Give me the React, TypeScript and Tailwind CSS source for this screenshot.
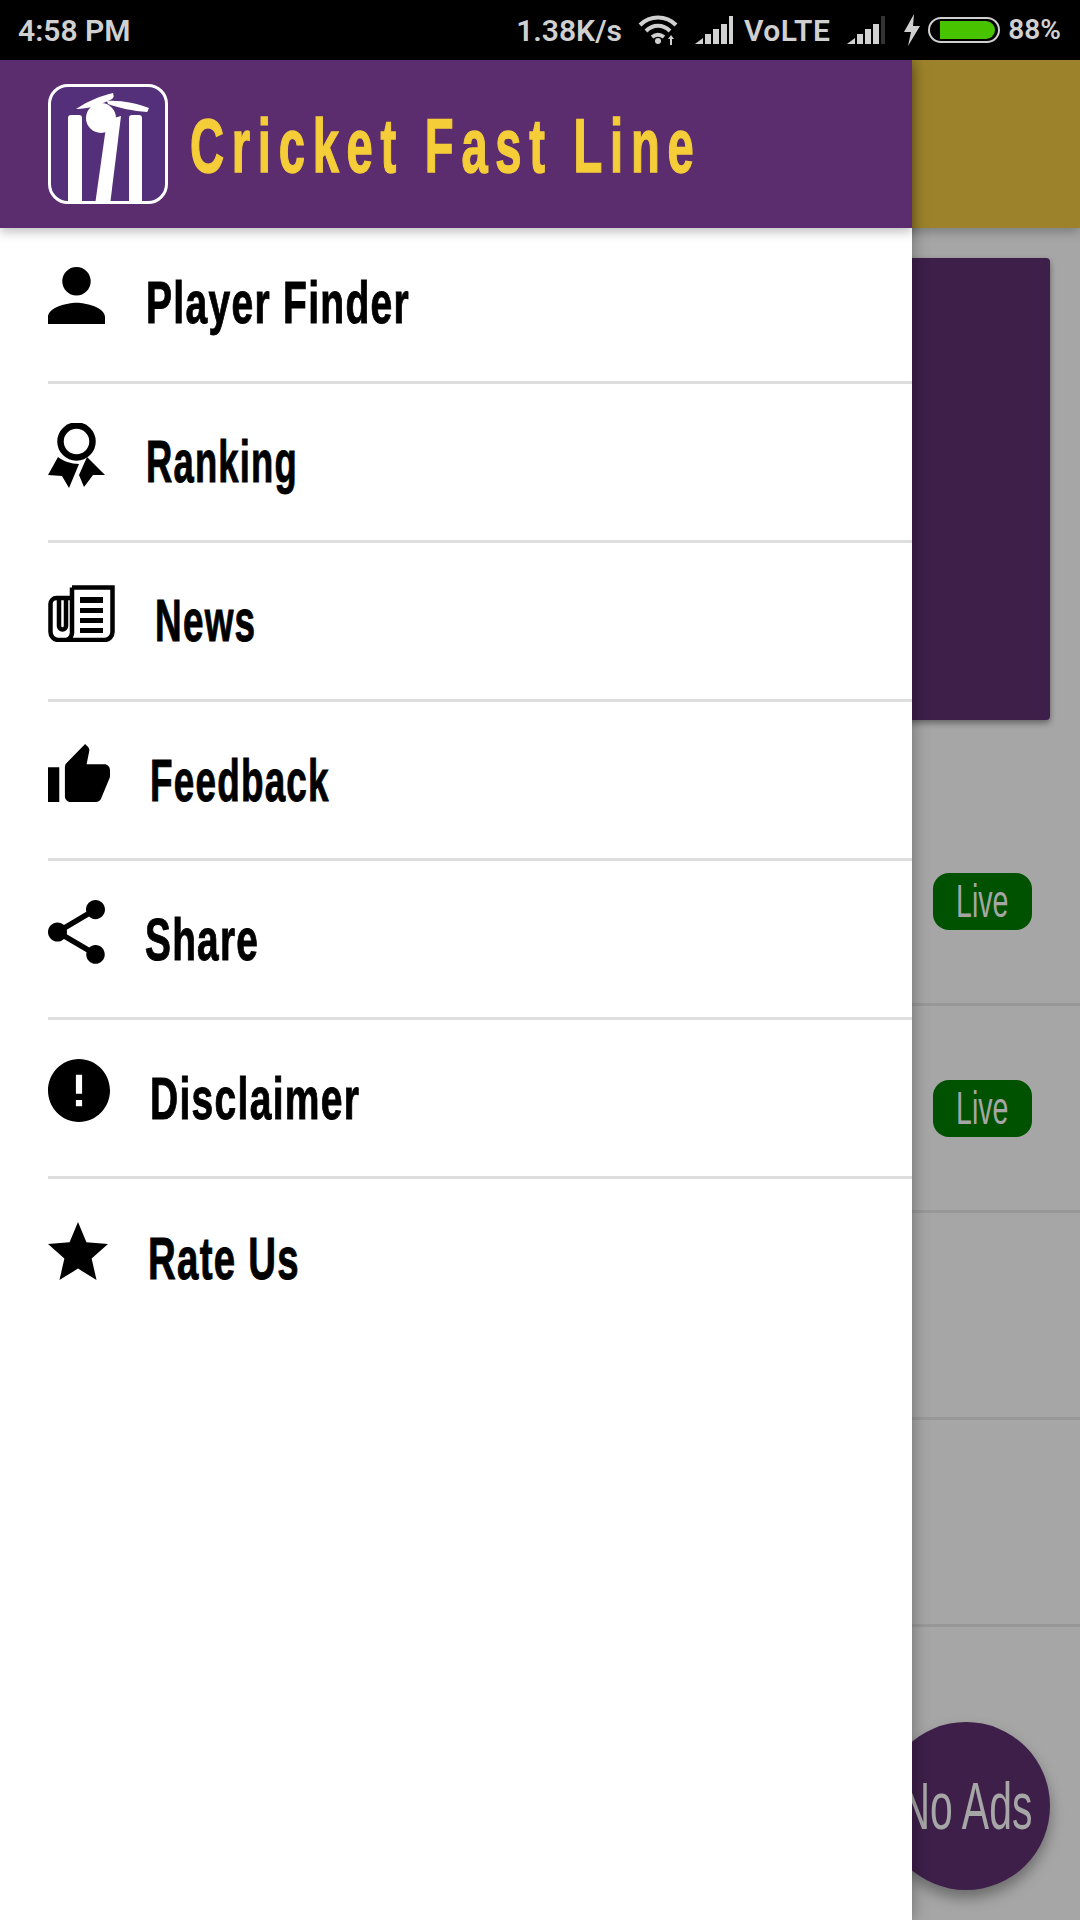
import type { ReactNode } from 'react'

const narrow = 'font-["Liberation_Sans_Narrow","Liberation_Sans",sans-serif]'

function PersonIcon() {
  return (
    <svg viewBox="4 4 16 16" className="h-[57px] w-[57px]" preserveAspectRatio="none">
      <path d="M12 12c2.21 0 4-1.79 4-4s-1.79-4-4-4-4 1.79-4 4 1.79 4 4 4zm0 2c-2.67 0-8 1.34-8 4v2h16v-2c0-2.66-5.33-4-8-4z" />
    </svg>
  )
}

function RibbonIcon() {
  return (
    <svg viewBox="0 0 57 65" className="h-[65px] w-[57px]">
      <circle cx="28.5" cy="18.5" r="16" fill="none" stroke="#000" strokeWidth="6.5" />
      <path d="M0 52 10 34c5 4 13 7 21 7L21 65l-7-12z" />
      <path d="M39 34 57 52H45l-9 12-5-12z" />
    </svg>
  )
}

function NewsIcon() {
  return (
    <svg viewBox="0 0 67 57" className="h-[57px] w-[67px]" fill="none" stroke="#000" strokeWidth="4.5">
      <path d="M24 2.5H64.500V47a8 8 0 0 1-8 8H10a8 8 0 0 1-7.500-8V19a6 6 0 0 1 6-6H24" />
      <path d="M24 2.500V46a9 9 0 0 1-5 9" />
      <path d="M11 13V41a3.500 3.500 0 0 0 7 0V13" />
      <path d="M32 12h23v6H32zM32 23h23v5H32zM32 33h23v5H32zM32 43h23v5H32z" fill="#000" stroke="none" />
    </svg>
  )
}

function ThumbIcon() {
  return (
    <svg viewBox="1 1 22 20" className="h-[58px] w-[62px]" preserveAspectRatio="none">
      <path d="M1 21h4V9H1v12zm22-11c0-1.1-.9-2-2-2h-6.31l.95-4.57.03-.32c0-.41-.17-.79-.44-1.06L14.17 1 7.59 7.59C7.22 7.95 7 8.45 7 9v10c0 1.1.9 2 2 2h9c.83 0 1.54-.5 1.84-1.22l3.02-7.05c.09-.23.14-.47.14-.73v-2z" />
    </svg>
  )
}

function ShareIcon() {
  return (
    <svg viewBox="3 2 18 20" className="h-[64px] w-[57px]" preserveAspectRatio="none">
      <path d="M18 16.08c-.76 0-1.44.3-1.96.77L8.91 12.7c.05-.23.09-.46.09-.7s-.04-.47-.09-.7l7.05-4.11c.54.5 1.25.81 2.04.81 1.66 0 3-1.34 3-3s-1.34-3-3-3-3 1.34-3 3c0 .24.04.47.09.7L8.04 9.81C7.5 9.31 6.79 9 6 9c-1.66 0-3 1.34-3 3s1.34 3 3 3c.79 0 1.5-.31 2.04-.81l7.12 4.16c-.05.21-.08.43-.08.65 0 1.61 1.31 2.92 2.92 2.92s2.92-1.31 2.92-2.92-1.31-2.92-2.92-2.92z" />
    </svg>
  )
}

function AlertIcon() {
  return (
    <svg viewBox="2 2 20 20" className="h-[63px] w-[62px]" preserveAspectRatio="none">
      <path d="M12 2C6.48 2 2 6.48 2 12s4.48 10 10 10 10-4.48 10-10S17.52 2 12 2zm1 15h-2v-2h2v2zm0-4h-2V7h2v6z" />
    </svg>
  )
}

function StarIcon() {
  return (
    <svg viewBox="2 2 20 19" className="h-[58px] w-[60px]" preserveAspectRatio="none">
      <path d="M12 17.27L18.18 21l-1.64-7.03L22 9.24l-7.19-.61L12 2 9.19 8.63 2 9.24l5.46 4.73L5.82 21z" />
    </svg>
  )
}

function Logo() {
  return (
    <div className="h-[120px] w-[120px] shrink-0 overflow-hidden rounded-[20px] border-[3px] border-white bg-[#55307a]">
      <svg viewBox="3 3 114 114" className="h-full w-full">
        <rect x="20" y="31" width="14" height="90" rx="3" fill="#fff" />
        <rect x="81" y="31" width="13" height="90" rx="3" fill="#fff" />
        <path d="M59 36 73 32 62 121H47z" fill="#fff" />
        <circle cx="53" cy="34" r="15" fill="#fff" />
        <path d="M28 25C40 17 52 12 65 9 66 12 66 13 64 15 52 21 40 25 28 25Z" fill="#fff" />
        <path d="M59 17C72 16 88 19 101 24 100 26 100 27 99 28 85 27 71 24 60 20Z" fill="#fff" />
      </svg>
    </div>
  )
}

function Signal({ faded }: { faded?: boolean }) {
  const bars = [
    'M0 28 8 22V28Z',
    'M10 18h6v10h-6z',
    'M18 13h6v15h-6z',
    'M26 8h6v20h-6z',
  ]
  return (
    <svg viewBox="0 0 38 28" className="h-[28px] w-[38px]" fill="#d2d2d2">
      {bars.map((d) => (
        <path key={d} d={d} />
      ))}
      <path d="M34 0h4v28h-4z" fill={faded ? '#333' : '#d2d2d2'} />
    </svg>
  )
}

function StatusBar() {
  return (
    <div className="relative z-20 flex h-[60px] shrink-0 items-center bg-black pl-[18px] pr-[19px] font-['Roboto',sans-serif] text-[30px] font-semibold text-[#d0d0d0]">
      <span>4:58 PM</span>
      <span className="ml-auto">1.38K/s</span>
      <svg viewBox="0 0 40 30" className="ml-[16px] h-[30px] w-[40px]" fill="none" stroke="#d0d0d0" strokeWidth="4">
        <path d="M2 10C12 0 28 0 38 10" />
        <path d="M8 16C15 9 25 9 32 16" />
        <path d="M14 22c4-3 8-3 12 0" />
        <circle cx="20" cy="26" r="3" fill="#d0d0d0" stroke="none" />
        <path d="M33 20l-3 4h2v6h2v-6h2z" fill="#d0d0d0" stroke="none" />
      </svg>
      <span className="ml-[17px]">
        <Signal />
      </span>
      <span className="ml-[11px] tracking-[0.5px]">VoLTE</span>
      <span className="ml-[17px]">
        <Signal faded />
      </span>
      <svg viewBox="0 0 16 32" className="ml-[19px] h-[32px] w-[16px]" fill="#d0d0d0">
        <path d="M10 0 0 18H7L4 32 16 12H9z" />
      </svg>
      <div className="ml-[8px] flex h-[26px] w-[72px] items-center rounded-full border-2 border-[#d0d0d0] pl-[10px] pr-[3px]">
        <div className="h-[18px] w-full rounded-r-full bg-[#47c300]" />
      </div>
      <span className="ml-[8px] text-[28px]">88%</span>
    </div>
  )
}

function LiveRow({ live }: { live?: boolean }) {
  return (
    <div className="flex h-[207px] items-center justify-end border-b-[3px] border-[#989898] pr-[48px]">
      {live && (
        <div className="flex h-[57px] w-[99px] items-center justify-center rounded-[16px] bg-[#005200]">
          <span className={`${narrow} scale-x-[0.62] text-[46px] leading-none text-[#a6a6a6]`}>Live</span>
        </div>
      )}
    </div>
  )
}

function MenuRow({ icon, label, rowClass, iconClass, labelClass }: { icon: ReactNode; label: string; rowClass: string; iconClass: string; labelClass: string }) {
  return (
    <div className={`flex items-start ${rowClass}`}>
      <div className={iconClass}>{icon}</div>
      <span className={`${narrow} origin-left whitespace-nowrap text-[60px] font-bold leading-[60px] tracking-[2px] text-black [-webkit-text-stroke:1px_#000] ${labelClass}`}>{label}</span>
    </div>
  )
}

const menu = [
  { icon: <PersonIcon />, label: 'Player Finder', rowClass: 'h-[156px] border-b-[3px] border-[#dedede]', iconClass: 'mt-[39px] w-[98px]', labelClass: 'mt-[45px] scale-x-[0.65]' },
  { icon: <RibbonIcon />, label: 'Ranking', rowClass: 'h-[159px] border-b-[3px] border-[#dedede]', iconClass: 'mt-[39px] w-[98px]', labelClass: 'mt-[48px] scale-x-[0.606]' },
  { icon: <NewsIcon />, label: 'News', rowClass: 'h-[159px] border-b-[3px] border-[#dedede]', iconClass: 'mt-[42px] w-[107px]', labelClass: 'mt-[48px] scale-x-[0.615]' },
  { icon: <ThumbIcon />, label: 'Feedback', rowClass: 'h-[159px] border-b-[3px] border-[#dedede]', iconClass: 'mt-[42px] w-[102px]', labelClass: 'mt-[49px] scale-x-[0.614]' },
  { icon: <ShareIcon />, label: 'Share', rowClass: 'h-[159px] border-b-[3px] border-[#dedede]', iconClass: 'mt-[39px] w-[97px]', labelClass: 'mt-[49px] scale-x-[0.646]' },
  { icon: <AlertIcon />, label: 'Disclaimer', rowClass: 'h-[159px] border-b-[3px] border-[#dedede]', iconClass: 'mt-[39px] w-[102px]', labelClass: 'mt-[49px] scale-x-[0.65]' },
  { icon: <StarIcon />, label: 'Rate Us', rowClass: 'h-[159px]', iconClass: 'mt-[43px] w-[100px]', labelClass: 'mt-[50px] scale-x-[0.64]' },
]

export default function App() {
  return (
    <div className="flex h-[1920px] w-[1080px] flex-col overflow-hidden bg-[#a6a6a6]">
      <StatusBar />

      <div className="relative flex-1">
        {/* screen behind the drawer, dimmed */}
        <div className="flex flex-col">
          <div className="h-[168px] bg-[#9c832b] shadow-[0_4px_10px_rgba(0,0,0,0.25)]" />
          <div className="mx-[30px] mb-[79px] mt-[30px] h-[462px] rounded-[4px] bg-[#3d1f49] shadow-[0_3px_6px_rgba(0,0,0,0.4)]" />
          <LiveRow live />
          <LiveRow live />
          <LiveRow />
          <LiveRow />
        </div>

        <div className="absolute left-[882px] top-[1662px] flex h-[168px] w-[168px] items-center justify-center rounded-full bg-[#3d1f49] shadow-[0_8px_14px_rgba(0,0,0,0.35)]">
          <span className={`${narrow} scale-x-[0.62] whitespace-nowrap text-[66px] leading-none text-[#a6a6a6]`}>No Ads</span>
        </div>

        {/* drawer */}
        <div className="absolute inset-y-0 left-0 flex w-[912px] flex-col bg-white shadow-[0_0_16px_rgba(0,0,0,0.35)]">
          <div className="flex h-[168px] shrink-0 items-center bg-[#5b2d6e] pl-[48px] shadow-[0_4px_10px_rgba(0,0,0,0.25)]">
            <Logo />
            <span className={`${narrow} ml-[22px] mt-[4px] origin-left scale-x-[0.62] whitespace-nowrap text-[76px] font-bold leading-none tracking-[12.5px] text-[#f4cd38] [-webkit-text-stroke:1.5px_#f4cd38]`}>
              Cricket Fast Line
            </span>
          </div>
          <div className="flex flex-col pl-[48px]">
            {menu.map((item) => (
              <MenuRow key={item.label} {...item} />
            ))}
          </div>
        </div>
      </div>
    </div>
  )
}
